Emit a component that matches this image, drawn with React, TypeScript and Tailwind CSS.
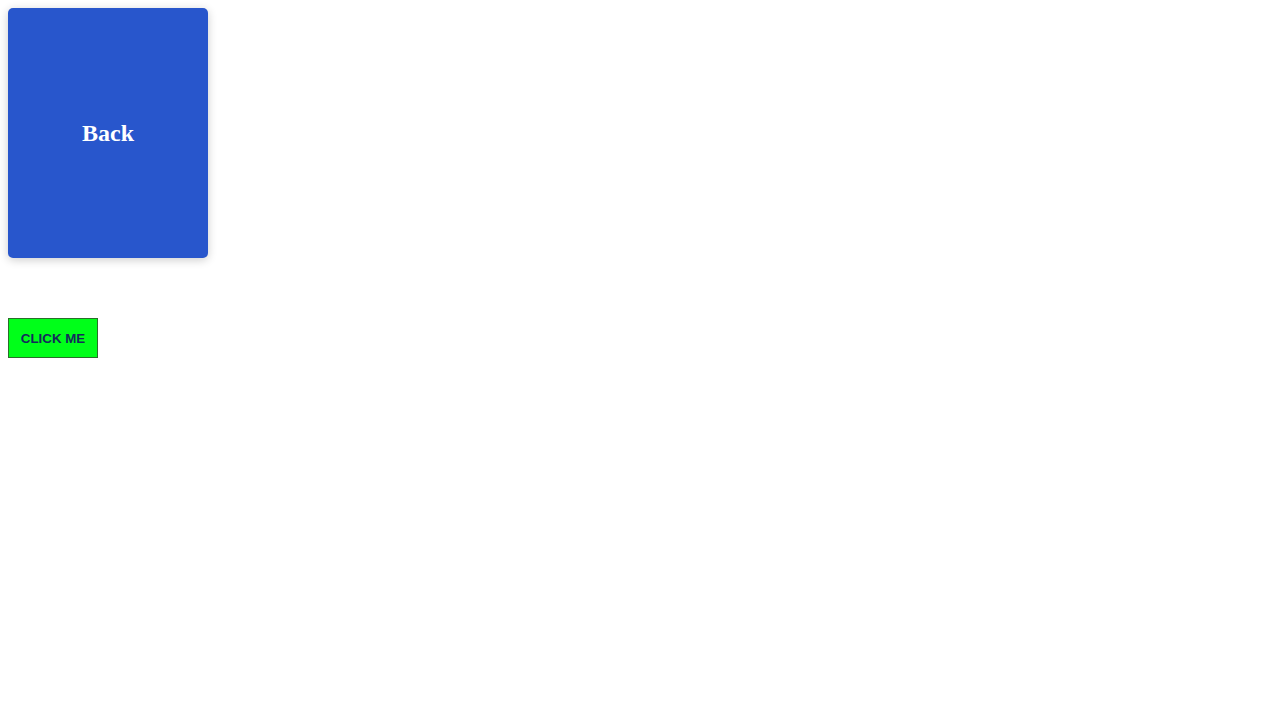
export default function App() {
  return (
    <div className="p-2 bg-white min-h-screen">
      <div className="w-[200px] h-[250px] rounded-[5px] bg-[#2856cc] shadow-[0_2px_10px_rgba(0,0,0,0.2)] flex items-center justify-center">
        <h2 className="text-white font-bold text-[24px] leading-none" style={{ fontFamily: '"Liberation Serif", serif' }}>
          Back
        </h2>
      </div>
      <button
        className="mt-[60px] w-[90px] h-[40px] bg-[#00ff19] border border-[#2a6e2a] text-[#142a5c] font-bold text-[13.33px] leading-none pt-[2px] uppercase flex items-center justify-center"
        style={{ fontFamily: '"Liberation Sans", Arial, sans-serif' }}
      >
        Click me
      </button>
    </div>
  );
}
